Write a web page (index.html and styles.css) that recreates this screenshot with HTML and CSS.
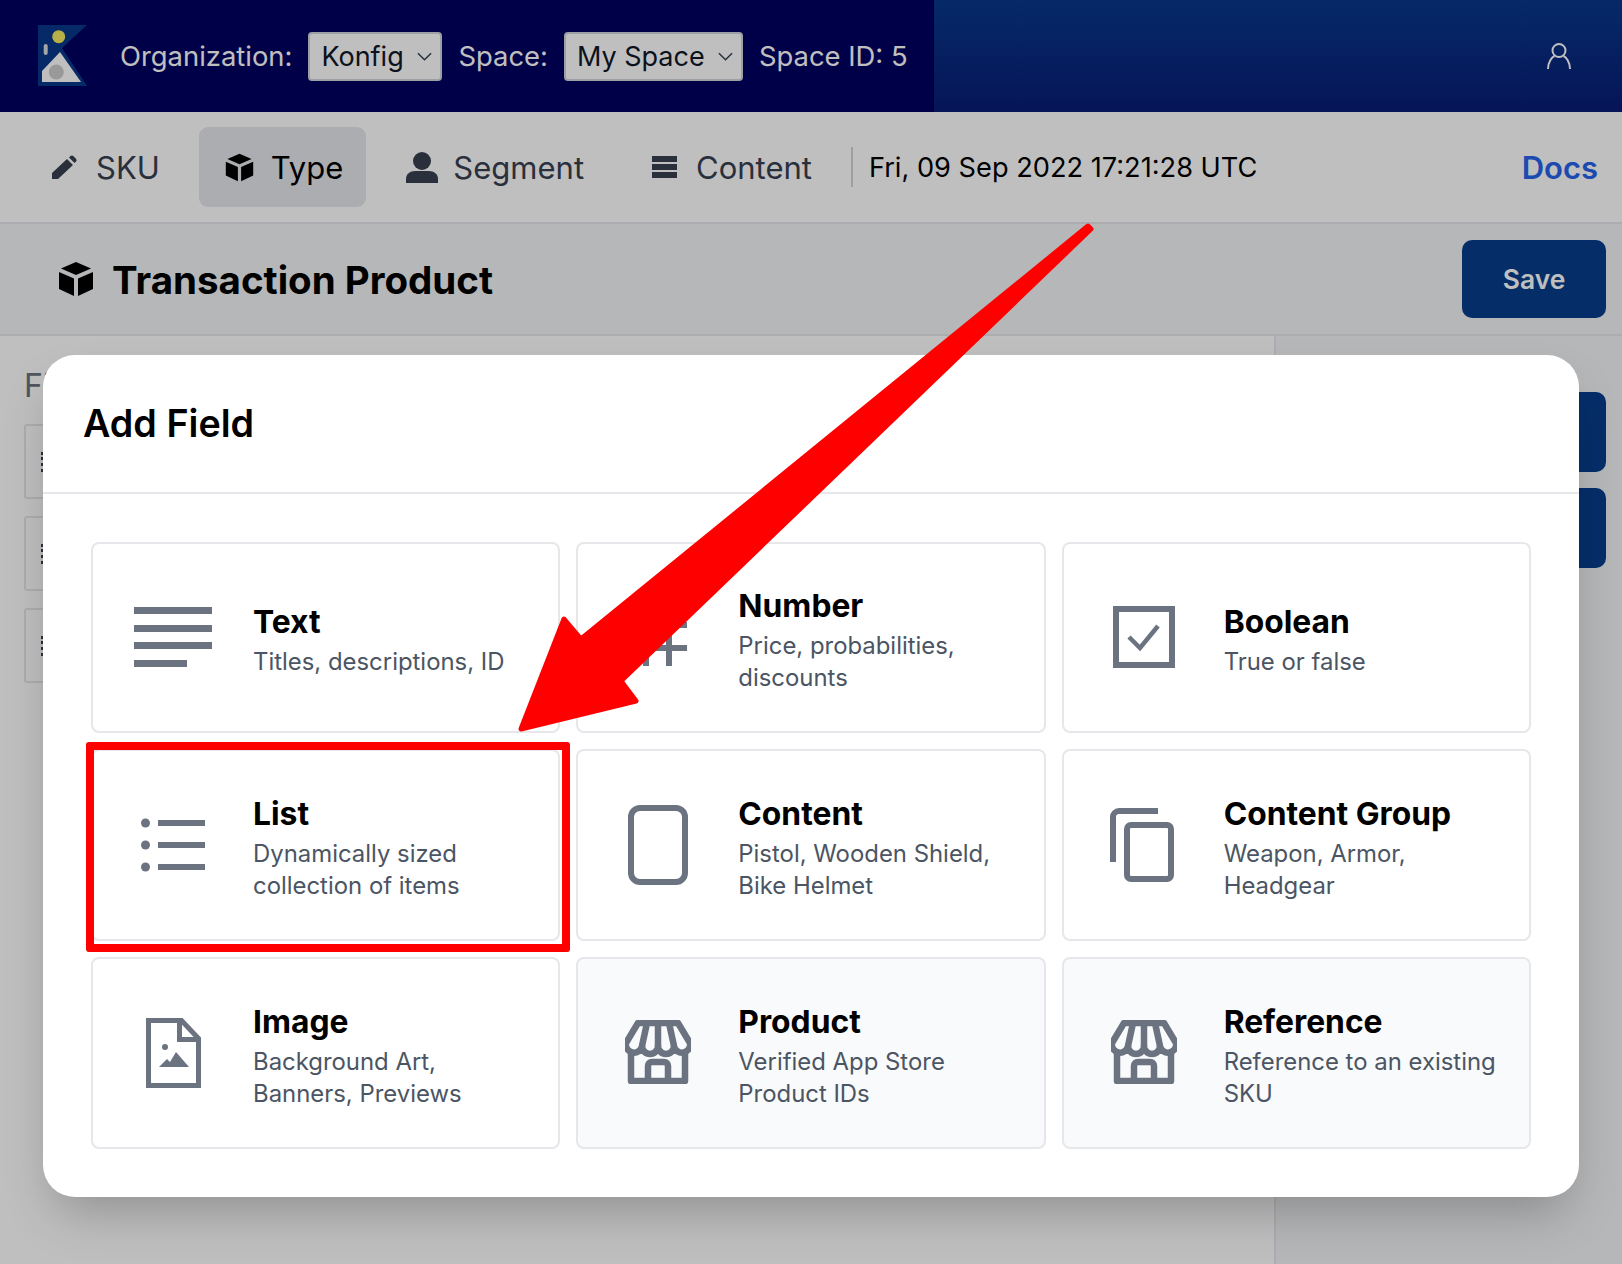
FILE: index.html
```html
<!DOCTYPE html>
<html lang="en">
<head>
<meta charset="utf-8">
<title>Add Field</title>
<link rel="stylesheet" href="styles.css">
</head>
<body>
<div class="page">
  <header class="topbar">
    <div class="top-left">
      <svg class="logo" viewBox="38 25 49 61" aria-hidden="true">
        <polygon points="38,25 87,25 62,48 87,86 38,86" fill="#08388a"/>
        <polygon points="60,52 81,82 42,82 42,71" fill="#fff"/>
        <circle cx="58.7" cy="36.7" r="6.5" fill="#f5ea5f"/>
        <rect x="43.7" y="44" width="4" height="11" rx="2" fill="#ddd"/>
        <circle cx="56.3" cy="72" r="7.5" fill="#ccc"/>
      </svg>
      <span class="top-label">Organization:</span>
      <div class="select select-org"><span>Konfig</span><svg class="chev" viewBox="0 0 16 9"><path d="M1 1l7 7 7-7"/></svg></div>
      <span class="top-label">Space:</span>
      <div class="select select-space"><span>My Space</span><svg class="chev" viewBox="0 0 16 9"><path d="M1 1l7 7 7-7"/></svg></div>
      <span class="top-label">Space ID: 5</span>
    </div>
    <div class="top-right">
      <svg class="user" viewBox="0 0 24 26"><circle cx="12" cy="7.5" r="6.5"/><path d="M1 26c0-7 4-12 6.5-13M23 26c0-7-4-12-6.5-13"/></svg>
    </div>
  </header>

  <nav class="nav">
    <a class="nav-item">
      <svg class="ic-pencil" viewBox="0 0 25 24"><path d="M0 24v-6L15 4l6 6L6 24zM17 2.500l1.500-1.500c.8-.8 2-.8 2.800 0l2.700 2.700c.8.800.8 2 0 2.800L22.500 8z"/></svg>
      <span>SKU</span>
    </a>
    <a class="nav-item nav-active">
      <svg class="ic-cube" viewBox="0 0 36 36"><use href="#cube"/></svg>
      <span>Type</span>
    </a>
    <a class="nav-item">
      <svg class="ic-user" viewBox="0 0 32 31"><circle cx="16" cy="9" r="9"/><path d="M0 27c0-5 4-8 9-8h14c5 0 9 3 9 8v4H0z"/></svg>
      <span>Segment</span>
    </a>
    <a class="nav-item">
      <svg class="ic-lines" viewBox="0 0 25 22"><rect width="25" height="6"/><rect y="8" width="25" height="6"/><rect y="16" width="25" height="6"/></svg>
      <span>Content</span>
    </a>
    <div class="nav-date">Fri, 09 Sep 2022 17:21:28 UTC</div>
    <a class="docs">Docs</a>
  </nav>

  <section class="titlebar">
    <svg class="title-cube" viewBox="0 0 36 36"><use href="#cube"/></svg>
    <h1>Transaction Product</h1>
    <button class="primary save">Save</button>
  </section>

  <main class="main">
    <div class="fields">
      <div class="fields-label">Fields</div>
      <div class="field-row"><i class="drag"></i></div>
      <div class="field-row"><i class="drag"></i></div>
      <div class="field-row"><i class="drag"></i></div>
    </div>
    <aside class="side">
      <div class="side-btn"></div>
      <div class="side-btn"></div>
    </aside>
  </main>

  <div class="overlay">
    <div class="modal">
      <h2 class="modal-title">Add Field</h2>
      <div class="grid">
        <div class="card">
          <div class="icon"><svg class="i-text" viewBox="0 0 78 60"><rect width="78" height="7"/><rect y="18" width="78" height="7"/><rect y="35" width="78" height="7"/><rect y="53" width="53" height="7"/></svg></div>
          <div><div class="card-title">Text</div><div class="card-desc">Titles, descriptions, ID</div></div>
        </div>
        <div class="card">
          <div class="icon"><svg class="i-hash" viewBox="0 0 60 56"><path d="M18 0v56M41 0v56M1 15h58M1 38h58"/></svg></div>
          <div><div class="card-title">Number</div><div class="card-desc">Price, probabilities,<br>discounts</div></div>
        </div>
        <div class="card">
          <div class="icon"><svg class="i-check" viewBox="0 0 62 62"><rect x="3" y="3" width="56" height="56"/><path class="thin" d="M16 31l11 11 18-22"/></svg></div>
          <div><div class="card-title">Boolean</div><div class="card-desc">True or false</div></div>
        </div>
        <div class="card">
          <div class="icon"><svg class="i-list" viewBox="0 0 64 54"><circle class="dot" cx="4.500" cy="5" r="4.500"/><circle class="dot" cx="4.500" cy="27" r="4.500"/><circle class="dot" cx="4.500" cy="49" r="4.500"/><path d="M17 5h47M17 27h47M17 49h47"/></svg></div>
          <div><div class="card-title">List</div><div class="card-desc">Dynamically sized<br>collection of items</div></div>
        </div>
        <div class="card">
          <div class="icon"><svg class="i-content" viewBox="0 0 60 80"><rect x="3" y="3" width="54" height="74" rx="9"/></svg></div>
          <div><div class="card-title">Content</div><div class="card-desc">Pistol, Wooden Shield,<br>Bike Helmet</div></div>
        </div>
        <div class="card">
          <div class="icon"><svg class="i-group" viewBox="0 0 64 74"><path d="M3 54V9a6 6 0 0 1 6-6h39"/><rect x="17" y="17" width="44" height="54" rx="4"/></svg></div>
          <div><div class="card-title">Content Group</div><div class="card-desc">Weapon, Armor,<br>Headgear</div></div>
        </div>
        <div class="card">
          <div class="icon"><svg class="i-image" viewBox="0 0 55 70"><path d="M2.500 2.500h33l17 18v47h-50z"/><path d="M33.500 2.500v19h19"/><circle class="dot" cx="19" cy="29" r="3"/><polygon class="dot nostroke" points="13,49 21,41 24,44 30,34 43,49"/></svg></div>
          <div><div class="card-title">Image</div><div class="card-desc">Background Art,<br>Banners, Previews</div></div>
        </div>
        <div class="card card-muted">
          <div class="icon"><svg class="i-store" viewBox="5 4 66 64"><use href="#store"/></svg></div>
          <div><div class="card-title">Product</div><div class="card-desc">Verified App Store<br>Product IDs</div></div>
        </div>
        <div class="card card-muted">
          <div class="icon"><svg class="i-store" viewBox="5 4 66 64"><use href="#store"/></svg></div>
          <div><div class="card-title">Reference</div><div class="card-desc">Reference to an existing<br>SKU</div></div>
        </div>
      </div>
    </div>
    <div class="redbox"></div>
    <svg class="arrow" viewBox="510 215 600 525"><polygon points="521,729 564,619 581,639 1088,226 1091,229 621,681 636,701"/></svg>
  </div>
</div>

<svg class="defs" aria-hidden="true">
  <defs>
    <g id="cube">
      <path d="M18 1l15 6.500L18 14 3 7.500z" />
      <path d="M1 11l15 6.500V35L1 28z"/>
      <path d="M35 11l-15 6.500V35l15-7z"/>
    </g>
    <g id="store">
      <path d="M18 7H58L70 27a8 8 0 0 1-16 3a8 8 0 0 1-16 0a8 8 0 0 1-16 0a8 8 0 0 1-16-3z"/>
      <path d="M27 7L22 30M38 7V30M49 7L54 30"/>
      <path d="M11 38V65H65V38"/>
      <path d="M28 65V50a4 4 0 0 1 4-4H44a4 4 0 0 1 4 4V65"/>
    </g>
  </defs>
</svg>
</body>
</html>
```

FILE: styles.css
```css
* { box-sizing: border-box; }
html, body { margin: 0; padding: 0; }
body { font-family: Inter, "Noto Sans", sans-serif; color: #000; background: #fff; }
.page { position: relative; width: 1622px; height: 1264px; overflow: hidden; display: flex; flex-direction: column; }
.defs { width: 0; height: 0; position: absolute; }

/* top bar */
.topbar { height: 112px; display: flex; flex: none; }
.top-left { width: 934px; background: #000060; border-right: 1px solid #000; display: flex; align-items: center; gap: 16px; padding-left: 38px; }
.logo { width: 49px; height: 61px; margin-right: 17px; margin-top: -2px; }
.top-label { color: #fff; font-size: 27.400px; }
.select { height: 49px; background: #fff; border: 2px solid #d1d5db; border-radius: 4px; display: flex; align-items: center; justify-content: space-between; padding: 0 8px 0 11px; font-size: 27px; color: #111827; }
.select-org { width: 134px; }
.select-space { width: 179px; }
.chev { width: 15px; height: 9px; fill: none; stroke: #374151; stroke-width: 1.6; }
.top-right { flex: 1; background: linear-gradient(#08388a, #071c75); display: flex; align-items: center; justify-content: flex-end; padding-right: 51px; }
.user { width: 24px; height: 26px; fill: none; stroke: #fff; stroke-width: 2; }

/* nav */
.nav { height: 112px; flex: none; border-bottom: 2px solid #e5e7eb; display: flex; align-items: center; padding: 0 24px 0 28px; gap: 16px; background: #fff; }
.nav-item { height: 80px; display: flex; align-items: center; padding: 1px 23px 0 24px; border-radius: 9px; color: #374151; font-size: 31px; margin-top: -1px; }
.nav-item svg { fill: #374151; flex: none; }
.nav-active { background: #e5e7eb; color: #000; }
.nav-active svg { fill: #000; }
.ic-pencil { width: 25px; height: 24px; margin-right: 19px; }
.ic-cube { width: 29px; height: 29px; margin: 0 17px 0 2px; }
.ic-user { width: 32px; height: 31px; margin-right: 15px; }
.ic-lines { width: 25px; height: 22px; margin: 0 19px 0 5px; }
.nav-date { border-left: 2px solid #d1d5db; height: 40px; line-height: 41px; padding-left: 16px; font-size: 27.200px; }
.docs { margin-left: auto; color: #2563eb; font-weight: 600; font-size: 31px; }

/* title bar */
.titlebar { height: 112px; flex: none; background: #f3f4f6; border-bottom: 2px solid #e5e7eb; display: flex; align-items: center; padding: 0 16px 0 58px; }
.title-cube { width: 36px; height: 36px; margin-right: 18px; flex: none; }
h1 { margin: 0; padding-top: 2px; font-size: 38.500px; font-weight: 700; letter-spacing: 0; }
.primary { border: 0; background: #073e8c; color: #fff; border-radius: 10px; font: 600 26.400px Inter, sans-serif; }
.save { margin-left: auto; width: 144px; height: 78px; }

/* page below */
.main { flex: 1; display: flex; min-height: 0; }
.fields { width: 1274px; padding: 32px 0 0 24px; display: flex; flex-direction: column; gap: 17px; flex: none; }
.fields-label { height: 39px; line-height: 36px; font-size: 32px; color: #6b7280; }
.field-row { height: 75px; border: 2px solid #e5e7eb; border-radius: 3px; display: flex; align-items: center; padding-left: 15px; }
.drag { display: block; width: 3px; height: 20px; border-left: 3px dotted #374151; }
.side { flex: 1; background: #f3f4f6; border-left: 2px solid #e5e7eb; padding: 56px 16px 0 0; display: flex; flex-direction: column; align-items: flex-end; gap: 16px; }
.side-btn { width: 200px; height: 80px; background: #073e8c; border-radius: 10px; }

/* modal */
.overlay { position: absolute; inset: 0; background: rgba(0,0,0,.25); padding: 355px 43px 0; }
.modal { width: 1536px; height: 842px; background: #fff; border-radius: 32px; box-shadow: 0 25px 50px -12px rgba(0,0,0,.25); display: flex; flex-direction: column; }
.modal-title { margin: 0; height: 138.500px; flex: none; border-bottom: 2px solid #e5e7eb; padding: 0 0 0 40px; display: flex; align-items: center; font-size: 37.700px; font-weight: 600; }
.grid { padding: 48px; display: grid; grid-template-columns: repeat(3, 1fr); grid-auto-rows: 191.750px; gap: 16px; }
.card { border: 2px solid #e5e7eb; border-radius: 8px; display: grid; grid-template-columns: 160px 1fr; align-items: center; background: #fff; }
.card-muted { background: #f9fafb; }
.card-title { font-size: 31.800px; font-weight: 650; padding-top: 1px; line-height: 49px; }
.card-desc { font-size: 23.900px; line-height: 32px; color: #4b5563; }
.icon { display: flex; justify-content: center; align-items: center; }
.icon svg { fill: none; stroke: #6b7280; stroke-width: 6; display: block; }
.i-text { width: 78px; height: 60px; fill: #6b7280 !important; stroke: none !important; }
.i-hash { width: 60px; height: 56px; margin-top: 2px; }
.i-check { width: 62px; height: 62px; }
.i-check .thin { stroke-width: 4.500; }
.i-list { width: 64px; height: 54px; }
.i-content { width: 60px; height: 80px; }
.i-group { width: 64px; height: 74px; margin-left: -3px; }
.i-image { width: 55px; height: 70px; stroke-width: 5 !important; }
.i-store { width: 66px; height: 64px; stroke-width: 6.500 !important; stroke-linejoin: round; margin-top: -1px; }
.dot { fill: #6b7280; stroke: none; }
.nostroke { stroke: none; }

/* annotations */
.redbox { position: absolute; left: 86px; top: 742px; width: 484px; height: 210px; border: 8px solid #f00; border-radius: 3px; }
.arrow { position: absolute; left: 510px; top: 215px; width: 600px; height: 525px; fill: #f00; stroke: #f00; stroke-width: 5; stroke-linejoin: round; }
```
